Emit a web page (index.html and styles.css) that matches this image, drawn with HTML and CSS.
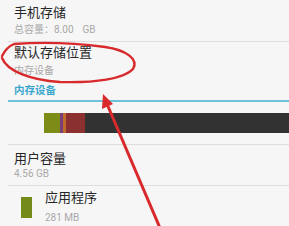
FILE: index.html
```html
<!DOCTYPE html>
<html lang="zh-CN">
<head>
<meta charset="utf-8">
<link rel="stylesheet" href="styles.css">
</head>
<body>
<div class="page">
  <div class="item first">
    <div class="title">手机存储</div>
    <div class="sub">总容量：8.00<span class="gap">GB</span></div>
  </div>
  <div class="divider"></div>
  <div class="item second">
    <div class="title">默认存储位置</div>
    <div class="sub">内存设备</div>
  </div>
  <div class="category">内存设备</div>
  <div class="category-line"></div>
  <div class="usage">
    <div class="bar">
      <span class="seg olive" style="width:16px"></span>
      <span class="seg purple" style="width:3px"></span>
      <span class="seg orange" style="width:3px"></span>
      <span class="seg brown" style="width:19px"></span>
      <span class="seg dark rest"></span>
    </div>
  </div>
  <div class="divider"></div>
  <div class="item third">
    <div class="title">用户容量</div>
    <div class="sub small">4.56 GB</div>
  </div>
  <div class="divider"></div>
  <div class="app">
    <div class="swatch"></div>
    <div class="app-text">
      <div class="title">应用程序</div>
      <div class="sub small last">281 MB</div>
    </div>
  </div>
  <svg class="marks" width="289" height="226" viewBox="0 0 289 226">
    <path d="M2,58 C7,71 30,80 60,82 C95,83 124,79 133,69 C139,59 126,50 105,47 C75,43 40,42 14,44 C9,46 5,50 2,56" fill="none" stroke="#d82a2c" stroke-width="2.4" stroke-linecap="round"/>
    <line x1="107" y1="104" x2="160" y2="228" stroke="#d82a2c" stroke-width="3"/>
    <polygon points="103,94 113,104 102,109" fill="#d82a2c"/>
  </svg>
</div>
</body>
</html>
```
FILE: styles.css
```css
html, body {
  margin: 0;
  padding: 0;
  background: #f6f6f6;
}
.page {
  position: relative;
  width: 289px;
  height: 226px;
  overflow: hidden;
  font-family: Roboto, "Noto Sans CJK SC", sans-serif;
  background: #f6f6f6;
}
.item {
  padding-left: 14px;
}
.title {
  font-size: 13px;
  line-height: 18px;
  color: #262626;
}
.sub {
  font-size: 10px;
  line-height: 14px;
  color: #a9a9a9;
}
.sub.small {
  line-height: 12px;
}
.gap {
  margin-left: 9px;
}
.first {
  padding-top: 4px;
  padding-bottom: 4px;
}
.first .sub {
  margin-top: 1px;
}
.divider {
  height: 1px;
  margin-left: 8px;
  background: #dedede;
}
.second {
  padding-top: 2px;
}
.second .sub {
  margin-top: 2px;
}
.category {
  margin-top: 6px;
  padding-left: 14px;
  font-size: 10.5px;
  line-height: 14px;
  font-weight: bold;
  color: #3aa6cc;
}
.category-line {
  margin-top: 2px;
  margin-left: 8px;
  height: 2px;
  background: #6cc2da;
}
.usage {
  padding: 11px 0 11px 44px;
}
.bar {
  display: flex;
  height: 20px;
}
.seg {
  display: block;
  height: 100%;
}
.olive { background: #7d8b17; }
.purple { background: #7a3e78; }
.orange { background: #c06a2c; }
.brown { background: #8a3030; }
.dark { background: #323232; }
.rest { flex: 1; }
.third {
  padding-top: 5px;
  padding-bottom: 5px;
}
.app {
  display: flex;
  padding-top: 3px;
}
.swatch {
  width: 11px;
  height: 21px;
  margin: 8px 0 0 21px;
  background: #758b19;
}
.app-text {
  margin-left: 13px;
}
.app .last {
  margin-top: 5px;
}
.marks {
  position: absolute;
  left: 0;
  top: 0;
  pointer-events: none;
}
```
